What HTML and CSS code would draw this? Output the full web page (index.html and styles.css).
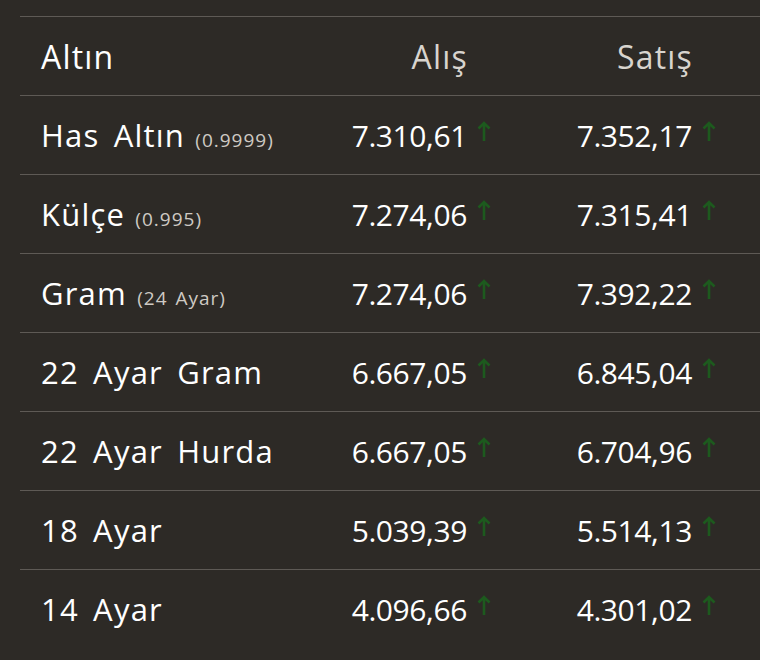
FILE: index.html
```html
<!DOCTYPE html>
<html lang="tr">
<head>
<meta charset="utf-8">
<link rel="stylesheet" href="styles.css">
</head>
<body>
<div class="table">
  <div class="row head">
    <div class="name">Altın</div>
    <div class="val">Alış</div>
    <div class="arr"></div>
    <div class="val">Satış</div>
    <div class="arr"></div>
  </div>
  <div class="row">
    <div class="name">Has Altın <small>(0.9999)</small></div>
    <div class="val">7.310,61</div>
    <div class="arr"><svg viewBox="0 0 14 22"><path d="M7 21V3M1.5 8.5L7 3l5.5 5.5"/></svg></div>
    <div class="val">7.352,17</div>
    <div class="arr"><svg viewBox="0 0 14 22"><path d="M7 21V3M1.5 8.5L7 3l5.5 5.5"/></svg></div>
  </div>
  <div class="row">
    <div class="name">Külçe <small>(0.995)</small></div>
    <div class="val">7.274,06</div>
    <div class="arr"><svg viewBox="0 0 14 22"><path d="M7 21V3M1.5 8.5L7 3l5.5 5.5"/></svg></div>
    <div class="val">7.315,41</div>
    <div class="arr"><svg viewBox="0 0 14 22"><path d="M7 21V3M1.5 8.5L7 3l5.5 5.5"/></svg></div>
  </div>
  <div class="row">
    <div class="name">Gram <small>(24 Ayar)</small></div>
    <div class="val">7.274,06</div>
    <div class="arr"><svg viewBox="0 0 14 22"><path d="M7 21V3M1.5 8.5L7 3l5.5 5.5"/></svg></div>
    <div class="val">7.392,22</div>
    <div class="arr"><svg viewBox="0 0 14 22"><path d="M7 21V3M1.5 8.5L7 3l5.5 5.5"/></svg></div>
  </div>
  <div class="row">
    <div class="name">22 Ayar Gram</div>
    <div class="val">6.667,05</div>
    <div class="arr"><svg viewBox="0 0 14 22"><path d="M7 21V3M1.5 8.5L7 3l5.5 5.5"/></svg></div>
    <div class="val">6.845,04</div>
    <div class="arr"><svg viewBox="0 0 14 22"><path d="M7 21V3M1.5 8.5L7 3l5.5 5.5"/></svg></div>
  </div>
  <div class="row">
    <div class="name">22 Ayar Hurda</div>
    <div class="val">6.667,05</div>
    <div class="arr"><svg viewBox="0 0 14 22"><path d="M7 21V3M1.5 8.5L7 3l5.5 5.5"/></svg></div>
    <div class="val">6.704,96</div>
    <div class="arr"><svg viewBox="0 0 14 22"><path d="M7 21V3M1.5 8.5L7 3l5.5 5.5"/></svg></div>
  </div>
  <div class="row">
    <div class="name">18 Ayar</div>
    <div class="val">5.039,39</div>
    <div class="arr"><svg viewBox="0 0 14 22"><path d="M7 21V3M1.5 8.5L7 3l5.5 5.5"/></svg></div>
    <div class="val">5.514,13</div>
    <div class="arr"><svg viewBox="0 0 14 22"><path d="M7 21V3M1.5 8.5L7 3l5.5 5.5"/></svg></div>
  </div>
  <div class="row">
    <div class="name">14 Ayar</div>
    <div class="val">4.096,66</div>
    <div class="arr"><svg viewBox="0 0 14 22"><path d="M7 21V3M1.5 8.5L7 3l5.5 5.5"/></svg></div>
    <div class="val">4.301,02</div>
    <div class="arr"><svg viewBox="0 0 14 22"><path d="M7 21V3M1.5 8.5L7 3l5.5 5.5"/></svg></div>
  </div>
</div>
</body>
</html>
```

FILE: styles.css
```css
html, body {
  margin: 0;
  padding: 0;
  background: #2d2a26;
  overflow: hidden;
}
body {
  padding: 16px 0 0 20px;
  font-family: "Open Sans", sans-serif;
  color: #ffffff;
}
.table {
  width: 740px;
}
.row {
  display: grid;
  grid-template-columns: 290px 157px 40px 185px 68px;
  height: 78px;
  align-items: center;
  border-top: 1px solid #5e5a55;
  font-size: 30px;
  letter-spacing: -0.4px;
}
.row .name {
  padding-left: 21px;
  font-size: 31px;
  letter-spacing: 1.2px;
  word-spacing: 5px;
  white-space: nowrap;
}
.row.head .name {
  font-size: 32px;
}
.row .name small {
  font-size: 19px;
  letter-spacing: 1px;
  color: #cfcac4;
  word-spacing: 2px;
  margin-left: -4px;
}
.val {
  text-align: right;
  white-space: nowrap;
}
.head .val {
  color: #d8d4ce;
  font-size: 32px;
  letter-spacing: 1.2px;
  margin-right: -1px;
}
.arr {
  padding-left: 10px;
  height: 22px;
  margin-top: -8px;
}
.arr svg {
  width: 14px;
  height: 22px;
  display: block;
  fill: none;
  stroke: #1d5a1e;
  stroke-width: 2.6;
}
```
